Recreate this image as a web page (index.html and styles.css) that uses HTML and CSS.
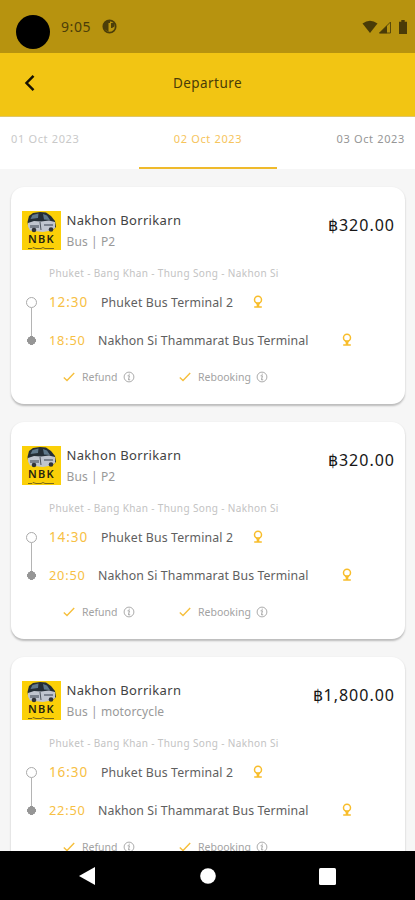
FILE: index.html
```html
<!DOCTYPE html>
<html lang="en">
<head>
<meta charset="utf-8">
<title>Departure</title>
<link rel="stylesheet" href="styles.css">
</head>
<body>
<svg class="defs" width="0" height="0" aria-hidden="true">
  <symbol id="pin" viewBox="0 0 10 14"><circle cx="5" cy="4.7" r="3.5" fill="none" stroke="#f8bd2b" stroke-width="1.500"/><path d="M2.500 7.500h5L6.300 9.800v1.400h2.500v1.600H1.200v-1.600h2.500V9.800z" fill="#f8bd2b"/></symbol>
  <symbol id="check" viewBox="0 0 12 10"><path d="M.8 5.600l3.200 3L11.200 1" fill="none" stroke="#f6bf3c" stroke-width="1.400"/></symbol>
  <symbol id="info" viewBox="0 0 12 12"><circle cx="6" cy="6" r="4.900" fill="none" stroke="#a2a2a2" stroke-width=".9"/><path d="M4.600 4.800h1.800L5.500 8.800h1.700M6.300 2.700l-.1 1" fill="none" stroke="#a2a2a2" stroke-width="1"/></symbol>
  <symbol id="van" viewBox="0 0 39 39">
    <path fill="#fbd008" d="M0 0h39v39H0z"/>
    <path fill="#252e36" d="M5.500 11l1.500-6 4-3 7-1 6 .5 5 3.500 4 5 1 6-5 4-20-1-3-5z"/>
    <path fill="#60788a" d="M8.500 8l2-4 6-1.500L16 7zM21 3l4 1.500 3 4.500-6-.5z"/>
    <path fill="#c0c5cf" d="M6 12l6-2 7 .5 8-1 6 1.500v6l-4 2.500-8 1.500-13-1.500-2-4z"/>
    <path fill="#7b828e" d="M8 14h9v3H8zM22 13h9v2h-9z"/>
    <circle cx="12" cy="19" r="2.300" fill="#303339"/><circle cx="29" cy="18.500" r="2.300" fill="#303339"/><path d="M18 11l1 8" stroke="#4c535d" stroke-width="1"/>
    <path d="M6 37.500h4l1-1 3 1h5l2-1 2 1h9" fill="none" stroke="#7a681a" stroke-width="1"/>
  </symbol>
</svg>
<div class="screen">
  <header class="status">
    <span class="camera"></span>
    <span class="clock">9:05</span>
    <svg class="app-icon" viewBox="0 0 15 15"><circle cx="7.500" cy="7.500" r="6.200" fill="none" stroke="#4c3e09" stroke-width="1.700"/><path d="M2 3.500L5 2h3v2H6.500v9L2 10zM9 4h3.500v3.500L10 9H9z" fill="#4c3e09"/></svg>
    <span class="signals">
      <svg width="16" height="14" viewBox="0 0 16 14"><path d="M.5 3.500Q8-2 15.500 3.500L8 13z" fill="#493b08"/></svg>
      <svg width="14" height="14" viewBox="0 0 14 14"><path d="M1.500 13L12.500 2v11z" fill="none" stroke="#59490a" stroke-width="1"/><path d="M1 13.300L9 5.500v7.800z" fill="#493b08"/></svg>
      <svg class="battery" width="8" height="14" viewBox="0 0 8 14"><path d="M0 1.800h2.300V0h3.400v1.800H8V14H0z" fill="#493b08"/></svg>
    </span>
  </header>
  <nav class="appbar">
    <svg class="back" width="11" height="18" viewBox="0 0 11 18"><path d="M9.500 1.800L2.500 9l7 7.200" fill="none" stroke="#161204" stroke-width="2.500"/></svg>
    <h1>Departure</h1>
  </nav>
  <div class="dates">
    <span class="date past">01 Oct 2023</span>
    <span class="date active">02 Oct 2023</span>
    <span class="date next">03 Oct 2023</span>
  </div>
  <main class="trips">
    <article class="card">
      <div class="head">
        <div class="logo"><svg viewBox="0 0 39 39"><use href="#van"/></svg><b>NBK</b></div>
        <div class="operator"><h2>Nakhon Borrikarn</h2><p>Bus | P2</p></div>
        <div class="price">฿320.00</div>
      </div>
      <p class="route">Phuket - Bang Khan - Thung Song - Nakhon Si</p>
      <div class="stops">
        <div class="rail"></div>
        <div class="stop from"><time>12:30</time><span class="place">Phuket Bus Terminal 2</span><svg class="pin"><use href="#pin"/></svg></div>
        <div class="stop to"><time>18:50</time><span class="place">Nakhon Si Thammarat Bus Terminal</span><svg class="pin"><use href="#pin"/></svg></div>
      </div>
      <div class="perks">
        <div class="perk refund"><svg class="check"><use href="#check"/></svg><span>Refund</span><svg class="info"><use href="#info"/></svg></div>
        <div class="perk rebook"><svg class="check"><use href="#check"/></svg><span>Rebooking</span><svg class="info"><use href="#info"/></svg></div>
      </div>
    </article>
    <article class="card">
      <div class="head">
        <div class="logo"><svg viewBox="0 0 39 39"><use href="#van"/></svg><b>NBK</b></div>
        <div class="operator"><h2>Nakhon Borrikarn</h2><p>Bus | P2</p></div>
        <div class="price">฿320.00</div>
      </div>
      <p class="route">Phuket - Bang Khan - Thung Song - Nakhon Si</p>
      <div class="stops">
        <div class="rail"></div>
        <div class="stop from"><time>14:30</time><span class="place">Phuket Bus Terminal 2</span><svg class="pin"><use href="#pin"/></svg></div>
        <div class="stop to"><time>20:50</time><span class="place">Nakhon Si Thammarat Bus Terminal</span><svg class="pin"><use href="#pin"/></svg></div>
      </div>
      <div class="perks">
        <div class="perk refund"><svg class="check"><use href="#check"/></svg><span>Refund</span><svg class="info"><use href="#info"/></svg></div>
        <div class="perk rebook"><svg class="check"><use href="#check"/></svg><span>Rebooking</span><svg class="info"><use href="#info"/></svg></div>
      </div>
    </article>
    <article class="card">
      <div class="head">
        <div class="logo"><svg viewBox="0 0 39 39"><use href="#van"/></svg><b>NBK</b></div>
        <div class="operator"><h2>Nakhon Borrikarn</h2><p>Bus | motorcycle</p></div>
        <div class="price">฿1,800.00</div>
      </div>
      <p class="route">Phuket - Bang Khan - Thung Song - Nakhon Si</p>
      <div class="stops">
        <div class="rail"></div>
        <div class="stop from"><time>16:30</time><span class="place">Phuket Bus Terminal 2</span><svg class="pin"><use href="#pin"/></svg></div>
        <div class="stop to"><time>22:50</time><span class="place">Nakhon Si Thammarat Bus Terminal</span><svg class="pin"><use href="#pin"/></svg></div>
      </div>
      <div class="perks">
        <div class="perk refund"><svg class="check"><use href="#check"/></svg><span>Refund</span><svg class="info"><use href="#info"/></svg></div>
        <div class="perk rebook"><svg class="check"><use href="#check"/></svg><span>Rebooking</span><svg class="info"><use href="#info"/></svg></div>
      </div>
    </article>
  </main>
  <footer class="navbar">
    <svg width="17" height="18" viewBox="0 0 17 18"><path d="M16 0v18L0 9z" fill="#fff"/></svg>
    <svg width="16" height="16" viewBox="0 0 16 16"><circle cx="8" cy="8" r="7.800" fill="#fff"/></svg>
    <svg width="17" height="17" viewBox="0 0 17 17"><rect width="17" height="17" rx="1.500" fill="#fff"/></svg>
  </footer>
</div>
</body>
</html>
```

FILE: styles.css
```css
* { box-sizing: border-box; }
body, h1, h2, p { margin: 0; }
body { font-family: "Noto Sans", "Open Sans", sans-serif; font-weight: 400; }
svg { display: block; flex: none; }
.defs { position: absolute; }
.screen { width: 415px; height: 900px; display: flex; flex-direction: column; overflow: hidden; background: #f6f6f6; }

.status { flex: none; height: 53px; background: #b7930f; display: flex; align-items: flex-start; padding: 15px 8px 0 16px; }
.camera { width: 34px; height: 34px; border-radius: 50%; background: #000; }
.clock { margin-left: 11px; width: 41px; font-size: 14px; line-height: 24px; letter-spacing: .6px; color: #4c3e09; }
.app-icon { width: 15px; height: 15px; margin-top: 4px; }
.signals { margin-left: auto; margin-top: 5px; display: flex; }
.battery { margin-left: 7px; }

.appbar { flex: none; height: 64px; background: #f2c513; border-bottom: 1px solid #dfc66a; display: grid; grid-template-columns: 40px 1fr 40px; align-items: center; }
.back { margin: -3px 0 0 24px; }
.appbar h1 { text-align: center; font-size: 13.500px; font-weight: 400; line-height: 20px; letter-spacing: .45px; color: #4a3c08; margin-top: -3px; }

.dates { flex: none; height: 52px; background: #fff; display: grid; grid-template-columns: 139px 138px 138px; }
.date { font-size: 11px; line-height: 16px; padding-top: 14px; letter-spacing: .65px; }
.past { padding-left: 11px; color: #c9c9c9; }
.active { text-align: center; color: #f6c45c; border-bottom: 2px solid #efba2c; }
.next { text-align: right; padding-right: 10px; color: #969696; }

.trips { flex: 1; min-height: 0; overflow: hidden; padding: 18px 10px 0 11px; display: flex; flex-direction: column; gap: 18px; }
.card { flex: none; height: 217px; padding: 24px 11px 0; background: #fff; border-radius: 13px; box-shadow: 0 1.500px 2px rgba(0,0,0,.24); }
.head { display: flex; height: 39px; }
.logo { position: relative; width: 39px; height: 39px; margin-right: 5.500px; }
.logo b { position: absolute; left: 0; right: 0; top: 21px; text-align: center; font-size: 11px; line-height: 14px; font-weight: 600; letter-spacing: 1.300px; color: #262410; }
.operator { flex: 1; }
.operator h2 { font-size: 13px; line-height: 18px; font-weight: 400; letter-spacing: .33px; color: #424242; }
.operator p { font-size: 12px; line-height: 18px; margin-top: 4px; letter-spacing: .1px; color: #999; }
.price { font-size: 16px; line-height: 28px; letter-spacing: 1px; margin-right: -1px; color: #161616; }
.route { margin: 15px 0 2px 27px; font-size: 10px; line-height: 16px; letter-spacing: .37px; color: #c3c3c3; white-space: nowrap; }

.stops { display: grid; grid-template-columns: 27px 1fr; grid-template-rows: 38px 38px; }
.rail { grid-row: 1 / 3; width: 9px; margin: 14px 0 14px 5px; display: flex; flex-direction: column; align-items: center; }
.rail::before { content: ""; width: 9px; height: 9px; border: 1px solid #aaa; border-radius: 50%; }
.rail::after { content: ""; width: 9px; flex: 1; background: radial-gradient(circle 4.500px at 4.500px calc(100% - 4.500px), #969696 92%, transparent) , linear-gradient(#b4b4b4, #b4b4b4) 4px 0 / 1px 100% no-repeat; }
.stop { display: flex; align-items: center; white-space: nowrap; }
.stop time { color: #f7c044; font-size: 13.500px; letter-spacing: .9px; }
.stop.from time { width: 52px; }
.stop.to time { width: 49px; font-size: 12.800px; letter-spacing: .8px; }
.place { font-size: 12.300px; letter-spacing: .1px; color: #606060; }
.from .place { width: 152px; letter-spacing: .15px; }
.to .place { width: 244px; }
.pin { width: 10px; height: 14px; }

.perks { display: flex; margin: 9px 0 0 41px; }
.perk { display: flex; align-items: center; height: 18px; font-size: 10.500px; color: #a2a2a2; }
.refund { width: 116px; }
.check { width: 12px; height: 10px; margin-right: 7px; }
.info { width: 12px; height: 12px; margin-left: 5px; }

.navbar { flex: none; height: 49px; background: #000; display: flex; align-items: center; justify-content: space-between; padding: 1px 79px 0; }
```
